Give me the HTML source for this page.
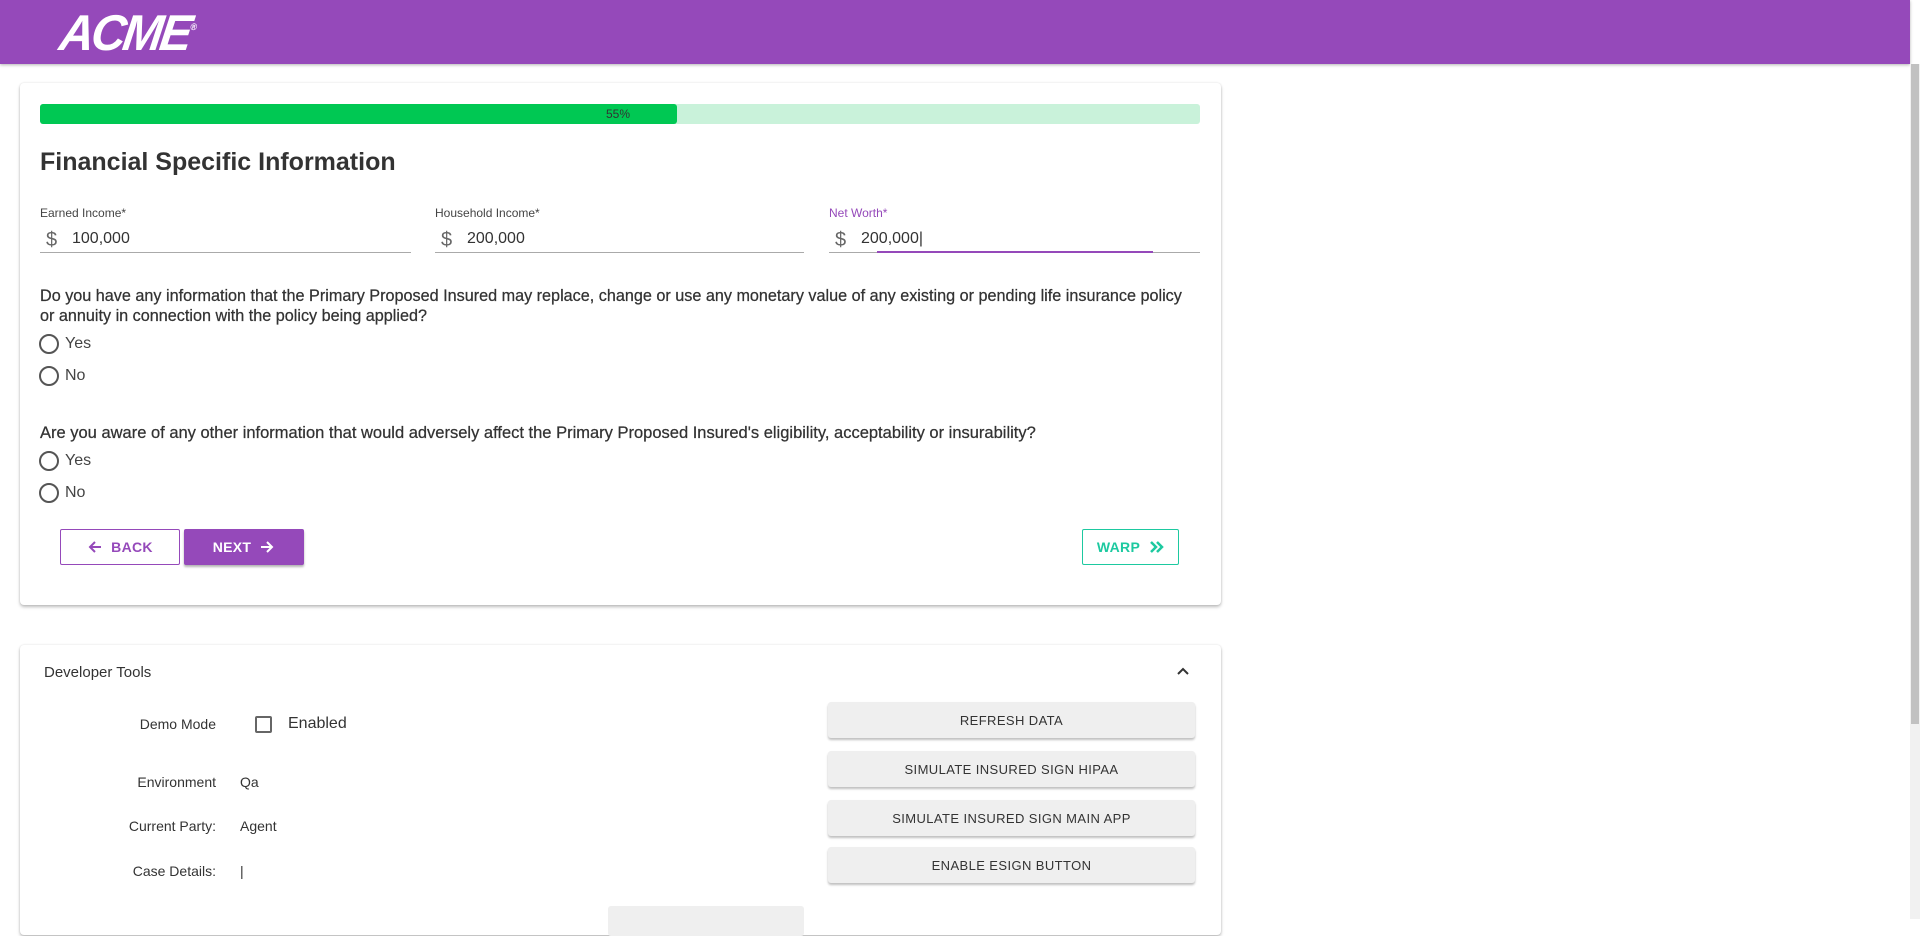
<!DOCTYPE html>
<html><head><meta charset="utf-8"><style>
*{box-sizing:border-box;margin:0;padding:0}
body{width:1920px;height:919px;overflow:hidden;background:#fff;font-family:"Liberation Sans",sans-serif;color:#333;position:relative}
.hdr{position:absolute;left:0;top:0;width:1910px;height:64px;background:#9549ba;box-shadow:0 1px 3px rgba(0,0,0,.3)}
.logo{position:absolute;left:60px;top:6px;color:#fff;font:italic 900 48px "Liberation Sans",sans-serif;letter-spacing:-3px;transform:skewX(-8deg) scaleY(1.05)}
.logo sup{font-size:9px;letter-spacing:0;position:relative;top:-2px}
.sb{position:absolute;right:0;top:64px;width:10px;height:855px;background:#f1f1f1}
.sb div{position:absolute;left:1px;top:0;width:8px;height:660px;background:#c1c1c1}
.card{position:absolute;background:#fff;border-radius:4px;box-shadow:0 2px 3px rgba(0,0,0,.25),0 0 2px rgba(0,0,0,.1)}
.abs{position:absolute}
.lbl{font-size:12px;color:#444}
.fld{position:absolute;height:40px;border-bottom:1px solid #aaa}
.fld .d{position:absolute;left:6px;top:16px;font-size:20px;color:#666}
.fld .v{position:absolute;left:32px;top:17px;font-size:16px;color:#333}
.q{font-size:16.5px;color:#333;line-height:20px;-webkit-text-stroke:.25px #333}
.r{position:absolute;width:20px;height:20px;border:2px solid #555;border-radius:50%}
.rl{position:absolute;font-size:16px;color:#444}
.btn{position:absolute;height:36px;border-radius:2px;font-size:14px;font-weight:bold;display:flex;align-items:center;justify-content:center;gap:8px;letter-spacing:.3px}
.gb{position:absolute;left:828px;width:367px;height:36px;background:#efefef;border-radius:3px;box-shadow:0 2px 2px rgba(0,0,0,.25);font-size:13px;color:#333;display:flex;align-items:center;justify-content:center;letter-spacing:.4px}
.dl{position:absolute;font-size:14px;color:#333;text-align:right;width:200px;left:16px}
.dv{position:absolute;left:240px;font-size:14px;color:#333}
</style></head><body>
<div class="hdr"><div class="logo">ACME<sup>®</sup></div></div>
<div class="sb"><div></div></div>

<div class="card" style="left:20px;top:83px;width:1201px;height:522px"></div>
<div class="abs" style="left:40px;top:104px;width:1160px;height:20px;background:#c9f2da;border-radius:3px"></div>
<div class="abs" style="left:40px;top:104px;width:637px;height:20px;background:#00c853;border-radius:3px"></div>
<div class="abs" style="left:606px;top:107px;font-size:12px;color:#333">55%</div>
<div class="abs" style="left:40px;top:148px;font-size:25px;font-weight:bold;color:#333">Financial Specific Information</div>

<div class="abs lbl" style="left:40px;top:206px">Earned Income*</div>
<div class="fld" style="left:40px;top:213px;width:371px"><span class="d">$</span><span class="v">100,000</span></div>
<div class="abs lbl" style="left:435px;top:206px">Household Income*</div>
<div class="fld" style="left:435px;top:213px;width:369px"><span class="d">$</span><span class="v">200,000</span></div>
<div class="abs lbl" style="left:829px;top:206px;color:#9549ba">Net Worth*</div>
<div class="fld" style="left:829px;top:213px;width:371px"><span class="d">$</span><span class="v">200,000|</span></div>
<div class="abs" style="left:877px;top:251px;width:276px;height:2px;background:#9549ba"></div>

<div class="abs q" style="left:40px;top:286px;width:1200px;white-space:nowrap;font-size:16.2px">Do you have any information that the Primary Proposed Insured may replace, change or use any monetary value of any existing or pending life insurance policy<br>or annuity in connection with the policy being applied?</div>
<div class="r" style="left:39px;top:334px"></div><div class="rl" style="left:65px;top:335px">Yes</div>
<div class="r" style="left:39px;top:366px"></div><div class="rl" style="left:65px;top:367px">No</div>
<div class="abs q" style="left:40px;top:423px;white-space:nowrap">Are you aware of any other information that would adversely affect the Primary Proposed Insured's eligibility, acceptability or insurability?</div>
<div class="r" style="left:39px;top:451px"></div><div class="rl" style="left:65px;top:452px">Yes</div>
<div class="r" style="left:39px;top:483px"></div><div class="rl" style="left:65px;top:484px">No</div>

<div class="btn" style="left:60px;top:529px;width:120px;border:1px solid #9549ba;color:#9549ba"><svg width="16" height="16"><path d="M14 8H3M8 3L3 8l5 5" stroke="#9549ba" stroke-width="2" fill="none"/></svg>BACK</div>
<div class="btn" style="left:184px;top:529px;width:120px;background:#9549ba;color:#fff;box-shadow:0 2px 2px rgba(0,0,0,.3)">NEXT<svg width="16" height="16"><path d="M2 8h11M8 3l5 5-5 5" stroke="#fff" stroke-width="2" fill="none"/></svg></div>
<div class="btn" style="left:1082px;top:529px;width:97px;border:1px solid #1dc9a0;color:#1dc9a0">WARP<svg width="16" height="16"><path d="M3 3l5 5-5 5M9 3l5 5-5 5" stroke="#1dc9a0" stroke-width="2.5" fill="none"/></svg></div>

<div class="card" style="left:20px;top:645px;width:1201px;height:290px"></div>
<div class="abs" style="left:44px;top:664px;font-size:15px;color:#333">Developer Tools</div>
<svg class="abs" style="left:1176px;top:666px" width="14" height="10"><path d="M2 8 L7 3 L12 8" stroke="#333" stroke-width="2" fill="none"/></svg>
<div class="dl" style="top:716px">Demo Mode</div>
<div class="abs" style="left:255px;top:716px;width:17px;height:17px;border:2px solid #666;border-radius:2px"></div>
<div class="abs" style="left:288px;top:715px;font-size:16px;color:#333">Enabled</div>
<div class="dl" style="top:774px">Environment</div><div class="dv" style="top:774px">Qa</div>
<div class="dl" style="top:818px">Current Party:</div><div class="dv" style="top:818px">Agent</div>
<div class="dl" style="top:863px">Case Details:</div><div class="dv" style="top:863px">|</div>
<div class="gb" style="top:702px">REFRESH DATA</div>
<div class="gb" style="top:751px">SIMULATE INSURED SIGN HIPAA</div>
<div class="gb" style="top:800px">SIMULATE INSURED SIGN MAIN APP</div>
<div class="gb" style="top:847px">ENABLE ESIGN BUTTON</div>
<div class="abs" style="left:608px;top:906px;width:196px;height:30px;background:#efefef;border-radius:3px"></div>
</body></html>
